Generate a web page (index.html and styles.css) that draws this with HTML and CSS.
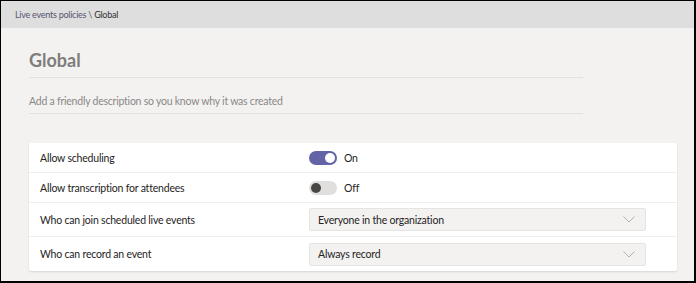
FILE: index.html
```html
<!DOCTYPE html>
<html>
<head>
<meta charset="utf-8">
<link rel="stylesheet" href="styles.css">
</head>
<body>
<div class="frame">
  <header class="topbar">
    <span class="crumb">Live events policies \ </span><span class="crumb-current">Global</span>
  </header>
  <main class="content">
    <div class="field title-field">
      <h1 class="title">Global</h1>
    </div>
    <div class="field desc-field">
      <span class="desc">Add a friendly description so you know why it was created</span>
    </div>
    <section class="card">
      <div class="row row-toggle">
        <span class="label">Allow scheduling</span>
        <span class="control">
          <span class="toggle on"><span class="knob"></span></span>
          <span class="state">On</span>
        </span>
      </div>
      <div class="row row-toggle">
        <span class="label">Allow transcription for attendees</span>
        <span class="control">
          <span class="toggle off"><span class="knob"></span></span>
          <span class="state">Off</span>
        </span>
      </div>
      <div class="row row-select">
        <span class="label">Who can join scheduled live events</span>
        <span class="select">
          <span class="select-text">Everyone in the organization</span>
          <svg class="chev" width="12" height="7" viewBox="0 0 12 7"><path d="M0.5 0.5 L6 6 L11.5 0.5" fill="none" stroke="#b3b0ad" stroke-width="1"/></svg>
        </span>
      </div>
      <div class="row row-select">
        <span class="label">Who can record an event</span>
        <span class="select">
          <span class="select-text">Always record</span>
          <svg class="chev" width="12" height="7" viewBox="0 0 12 7"><path d="M0.5 0.5 L6 6 L11.5 0.5" fill="none" stroke="#b3b0ad" stroke-width="1"/></svg>
        </span>
      </div>
    </section>
  </main>
</div>
</body>
</html>
```
FILE: styles.css
```css
* { box-sizing: border-box; }
html, body { margin: 0; padding: 0; background: #000; }
body { font-family: "Lato", "Open Sans", sans-serif; color: #252423; }
.frame {
  width: 696px;
  height: 283px;
  border-top: 1px solid #000;
  border-left: 1px solid #000;
  border-right: 2px solid #000;
  border-bottom: 2px solid #000;
  background: #f3f2f1;
  overflow: hidden;
}
.topbar {
  height: 27px;
  background: #dedede;
  display: flex;
  align-items: center;
  padding-left: 14px;
  font-size: 9px;
  letter-spacing: -0.25px;
  color: #57556f;
  white-space: pre;
}
.crumb-current { color: #323130; }
.content { padding: 0 0 0 28px; }
.field {
  width: 554px;
  border-bottom: 1px solid #e4e2e0;
}
.title-field { height: 50px; padding-top: 20px; }
.title {
  margin: 0;
  font-size: 18px;
  line-height: 24px;
  font-weight: 700;
  color: #7e7d7c;
}
.desc-field { height: 36px; padding-top: 15px; }
.desc {
  font-size: 10.5px;
  letter-spacing: -0.23px;
  color: #8a8886;
  line-height: 16px;
  display: block;
}
.card {
  margin-top: 29px;
  width: 648px;
  background: #fff;
  border-radius: 2px;
  box-shadow: 0 1px 2px rgba(0,0,0,0.12);
}
.row {
  display: grid;
  grid-template-columns: 280px 337px;
  align-items: center;
  border-bottom: 1px solid #f0efee;
  font-size: 10.5px;
  letter-spacing: -0.2px;
}
.row:last-child { border-bottom: none; }
.row-toggle { height: 30px; }
.row-select { height: 34px; }
.label { padding-left: 11px; color: #252423; }
.control { display: flex; align-items: center; gap: 7px; }
.toggle {
  width: 28px;
  height: 14px;
  border-radius: 7px;
  display: flex;
  align-items: center;
  padding: 0 2px;
}
.toggle .knob { width: 10px; height: 10px; border-radius: 50%; }
.toggle.on { background: #6264a7; justify-content: flex-end; }
.toggle.on .knob { background: #fff; }
.toggle.off { background: #e1dfdd; justify-content: flex-start; }
.toggle.off .knob { background: #484644; }
.state { color: #252423; }
.select {
  height: 23px;
  background: #f3f2f1;
  border: 1px solid #e6e4e2;
  border-radius: 2px;
  display: flex;
  align-items: center;
  justify-content: space-between;
  padding: 0 10px 0 8px;
}
.select-text { color: #252423; }
.chev { display: block; }
```
